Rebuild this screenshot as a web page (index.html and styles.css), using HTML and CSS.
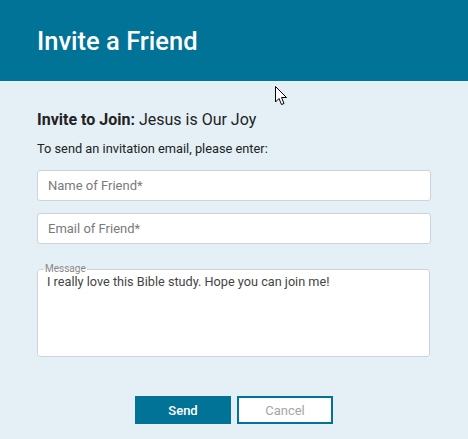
FILE: index.html
```html
<!DOCTYPE html>
<html>
<head>
<meta charset="utf-8">
<link rel="stylesheet" href="styles.css">
</head>
<body>
<div class="dialog">
  <header class="head"><h1 class="title">Invite a Friend</h1></header>
  <main class="content">
    <p class="join"><b>Invite to Join:</b> Jesus is Our Joy</p>
    <p class="lead">To send an invitation email, please enter:</p>
    <input class="field" type="text" placeholder="Name of Friend*">
    <input class="field field2" type="text" placeholder="Email of Friend*">
    <fieldset class="msg">
      <legend class="msg-label">Message</legend>
      <textarea class="msg-text">I really love this Bible study. Hope you can join me!</textarea>
    </fieldset>
    <div class="actions">
      <button class="btn btn-send">Send</button>
      <button class="btn btn-cancel">Cancel</button>
    </div>
  </main>
  <svg class="cursor" width="13" height="20" viewBox="0 0 13 20"><path d="M0.5 0.5 L0.5 16 L4 12.5 L6.5 18.5 L9 17.5 L6.5 11.5 L11.5 11.5 Z" fill="#fff" stroke="#000" stroke-width="1"/></svg>
</div>
</body>
</html>
```
FILE: styles.css
```css
html, body { margin: 0; padding: 0; }
body { font-family: Roboto, "Liberation Sans", sans-serif; background: #e4f0f6; width: 468px; height: 439px; overflow: hidden; }
.dialog { position: relative; height: 439px; }
.head { background: #007397; height: 81px; display: flex; align-items: center; padding-left: 37px; }
.title { margin: 0; color: #fff; font-size: 25.5px; font-weight: 500; }
.content { padding: 29px 37px 0 37px; display: flex; flex-direction: column; }
.join { margin: 0; font-size: 16px; color: #222; line-height: 19px; }
.join b { font-weight: 700; }
.lead { margin: 12px 0 0; font-size: 12.8px; color: #222; line-height: 16px; }
.field { box-sizing: border-box; width: 394px; height: 31px; margin: 13px 0 0; border: 1px solid #ccd3d9; border-radius: 3px; background: #fff; padding: 0 10px; font-family: inherit; font-size: 13px; color: #444; outline: none; }
.field::placeholder { color: #7a7a7a; }
.field2 { margin-top: 12px; }
.msg { box-sizing: border-box; width: 393px; height: 93px; margin: 20px 0 0; padding: 0 8px 0 9px; border: 1px solid #ccd3d9; border-radius: 3px; background: #fff; }
.msg-label { font-size: 10px; color: #888; padding: 0 1px; margin-left: -3px; line-height: 10px; }
.msg-text { box-sizing: border-box; width: 100%; height: 76px; border: none; resize: none; outline: none; padding: 0; margin: 0; font-family: inherit; font-size: 12.7px; color: #444; line-height: 16px; background: transparent; }
.actions { display: flex; justify-content: center; gap: 6px; margin-top: 39px; }
.btn { box-sizing: border-box; width: 96px; height: 28px; font-family: inherit; font-size: 13px; border-radius: 0; cursor: pointer; }
.btn-send { background: #007397; color: #fff; border: none; font-weight: 500; }
.btn-cancel { background: #fff; color: #a5a5a5; border: 2px solid #007397; }
.cursor { position: absolute; left: 275px; top: 86px; }
```
